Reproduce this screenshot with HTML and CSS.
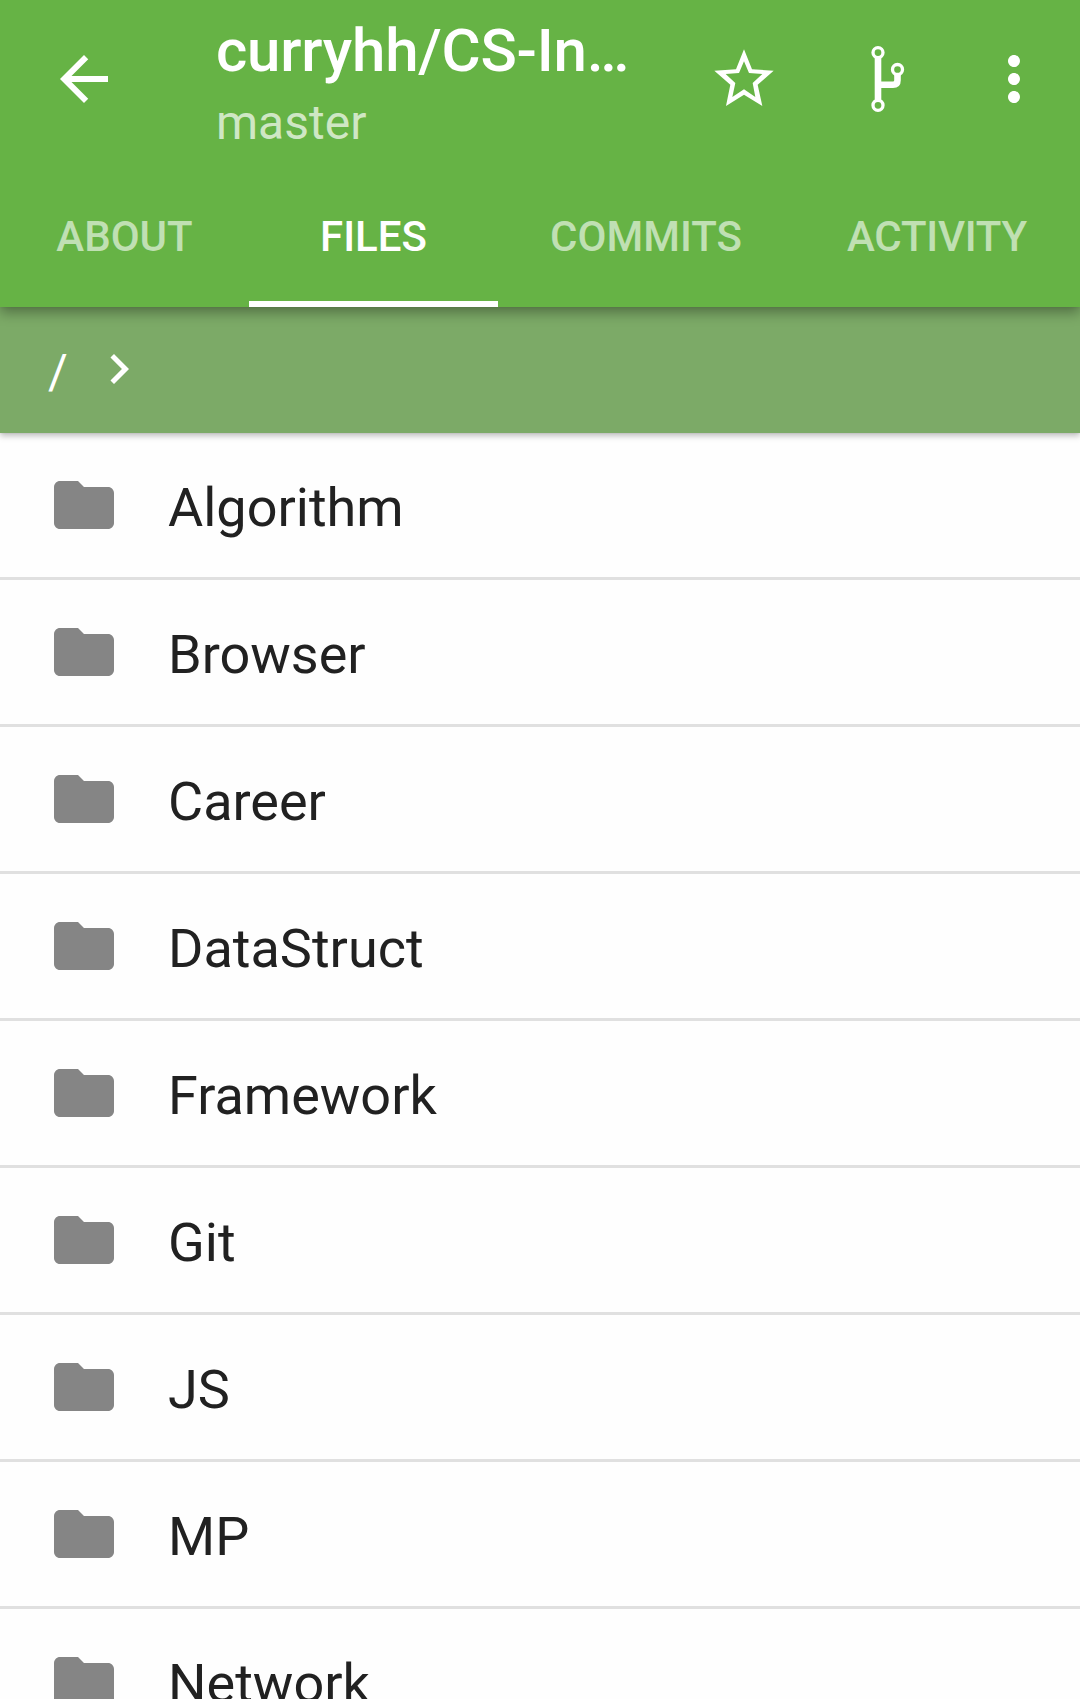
FILE: index.html
```html
<!DOCTYPE html>
<html lang="en">
<head>
<meta charset="utf-8">
<title>curryhh/CS-Interview</title>
<link rel="stylesheet" href="styles.css">
</head>
<body>
<svg class="defs" aria-hidden="true">
  <symbol id="folder" viewBox="0 0 24 24"><path d="M10 4H4c-1.1 0-1.99.9-1.99 2L2 18c0 1.1.9 2 2 2h16c1.1 0 2-.9 2-2V8c0-1.1-.9-2-2-2h-8l-2-2z"/></symbol>
</svg>
<header class="appbar">
  <div class="toolbar">
    <svg class="back" viewBox="0 0 24 24"><path d="M20 11H7.83l5.59-5.59L12 4l-8 8 8 8 1.41-1.41L7.83 13H20v-2z"/></svg>
    <div class="titles">
      <h1 class="title">curryhh/CS-In…</h1>
      <p class="subtitle">master</p>
    </div>
    <svg class="action star" viewBox="0 0 216 216"><path fill-rule="evenodd" d="M108 19L132 79L197 83L149 125L163 189L108 155L54 189L67 125L19 83L84 79ZM108 55L93 90L53 93L82 120L73 162L108 139L142 162L134 120L163 93L123 90Z"/></svg>
    <svg class="action branch" viewBox="0 0 72 72"><path class="line" d="M35 14.500V57.500M35 41.800H50Q54.500 41.800 54.500 37.300V31.500"/><circle cx="35" cy="9.600" r="5"/><circle cx="35" cy="62.300" r="5"/><circle cx="54.500" cy="26.500" r="5"/></svg>
    <svg class="action more" viewBox="0 0 24 24"><path d="M12 8c1.1 0 2-.9 2-2s-.9-2-2-2-2 .9-2 2 .9 2 2 2zm0 2c-1.100 0-2 .9-2 2s.9 2 2 2 2-.9 2-2-.9-2-2-2zm0 6c-1.100 0-2 .9-2 2s.9 2 2 2 2-.9 2-2-.9-2-2-2z"/></svg>
  </div>
  <nav class="tabs">
    <a class="tab">ABOUT</a>
    <a class="tab active">FILES</a>
    <a class="tab">COMMITS</a>
    <a class="tab tight">ACTIVITY</a>
  </nav>
</header>
<div class="path">
  <span>/</span>
  <svg class="chevron" viewBox="0 0 24 24"><path d="M10 6L8.590 7.410 13.170 12l-4.580 4.590L10 18l6-6z"/></svg>
</div>
<ul class="files">
  <li class="file"><svg class="folder"><use href="#folder"/></svg><span class="name">Algorithm</span></li>
  <li class="file"><svg class="folder"><use href="#folder"/></svg><span class="name">Browser</span></li>
  <li class="file"><svg class="folder"><use href="#folder"/></svg><span class="name">Career</span></li>
  <li class="file"><svg class="folder"><use href="#folder"/></svg><span class="name">DataStruct</span></li>
  <li class="file"><svg class="folder"><use href="#folder"/></svg><span class="name">Framework</span></li>
  <li class="file"><svg class="folder"><use href="#folder"/></svg><span class="name">Git</span></li>
  <li class="file"><svg class="folder"><use href="#folder"/></svg><span class="name">JS</span></li>
  <li class="file"><svg class="folder"><use href="#folder"/></svg><span class="name">MP</span></li>
  <li class="file"><svg class="folder"><use href="#folder"/></svg><span class="name">Network</span></li>
</ul>
</body>
</html>
```
FILE: styles.css
```css
* { box-sizing: border-box; }
body {
  margin: 0;
  height: 1699px;
  overflow: hidden;
  display: flex;
  flex-direction: column;
  background: #fefefe;
  color: #212121;
  font-family: Roboto, sans-serif;
}
.defs { display: none; }
.appbar {
  flex: none;
  height: 307px;
  display: flex;
  flex-direction: column;
  background: #66b345;
  color: #fff;
  position: relative;
  z-index: 2;
  box-shadow: 0 6px 12px rgba(0, 0, 0, .32), 0 0 4px rgba(0, 0, 0, .08);
}
.toolbar {
  height: 163px;
  display: flex;
  align-items: flex-start;
  padding-left: 48px;
  fill: currentColor;
}
.back { flex: none; width: 72px; height: 72px; margin-top: 43px; }
.titles { flex: none; width: 492px; padding: 16px 0 0 96px; white-space: nowrap; }
.title { margin: 0; font-size: 60px; line-height: 70px; font-weight: 500; letter-spacing: -.2px; }
.subtitle { margin: 0; padding-top: 9px; font-size: 48px; line-height: 56px; color: rgba(255, 255, 255, .7); }
.action { flex: none; width: 72px; height: 72px; margin-top: 43px; }
.star { margin-left: 96px; }
.branch { margin-left: 63px; fill: none; stroke: #fff; stroke-width: 3.3; }
.branch .line { stroke-width: 6.6; }
.more { margin-left: 63px; }
.tabs { height: 144px; display: grid; grid-template-columns: 249px 249px 296px 286px; }
.tab {
  padding-top: 49px;
  text-align: center;
  font-size: 42px;
  line-height: 50px;
  font-weight: 500;
  color: rgba(255, 255, 255, .6);
}
.tab.active { color: #fff; border-bottom: 6px solid #fff; }
.tab.tight { letter-spacing: -.25px; }
.path {
  flex: none;
  height: 126px;
  display: flex;
  align-items: center;
  padding-left: 48px;
  background: #7caa67;
  color: #fff;
  fill: #fff;
  font-size: 48px;
  position: relative;
  z-index: 1;
  box-shadow: 0 3px 6px rgba(0, 0, 0, .25), 0 0 2px rgba(0, 0, 0, .1);
}
.path span { padding-top: 2px; }
.chevron { width: 60px; height: 60px; margin: 0 0 2px 21px; }
.files { margin: 0; padding: 0; list-style: none; }
.file {
  height: 147px;
  display: flex;
  align-items: center;
  gap: 48px;
  padding-left: 48px;
  border-bottom: 3px solid #e0e0e0;
  font-size: 54px;
}
.name { padding-top: 4px; }
.folder { width: 72px; height: 72px; fill: #858585; }
```
